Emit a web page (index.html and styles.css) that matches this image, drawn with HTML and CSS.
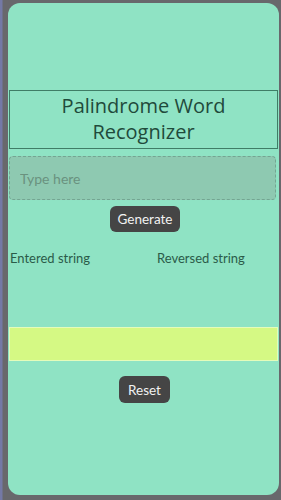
FILE: index.html
```html
<!DOCTYPE html>
<html>
<head>
<meta charset="utf-8">
<link rel="stylesheet" href="styles.css">
</head>
<body>
<div class="card">
  <h1 class="title">Palindrome Word Recognizer</h1>
  <input class="entry" type="text" placeholder="Type here">
  <div class="center"><button class="btn gen">Generate</button></div>
  <div class="labels">
    <span class="lab-left">Entered string</span>
    <span class="lab-right">Reversed string</span>
  </div>
  <div class="result"></div>
  <div class="center"><button class="btn reset">Reset</button></div>
</div>
</body>
</html>
```
FILE: styles.css
```css
html, body { margin: 0; padding: 0; }
body {
  width: 281px;
  height: 500px;
  background: linear-gradient(to right, #7479a6 0, #7479a6 2px, #68686c 3px);
  font-family: Lato, "Open Sans", sans-serif;
  padding: 3px 2px 5px 8px;
  box-sizing: border-box;
}
.card {
  background: #8fe3c4;
  border-radius: 12px;
  height: 492px;
  padding: 87px 1px 0 1px;
  box-sizing: border-box;
  display: flex;
  flex-direction: column;
}
.title {
  margin: 0;
  border: 1px solid #3f7d66;
  font-family: "Open Sans", "Noto Sans", sans-serif;
  font-weight: 400;
  font-size: 20px;
  line-height: 26px;
  color: #1f4a3b;
  text-align: center;
  padding: 2px 20px 3px;
}
.entry {
  margin: 7px 2px 0 0;
  height: 44px;
  box-sizing: border-box;
  border: 1px dashed #74a592;
  border-radius: 4px;
  background: #8ec9b1;
  padding: 0 10px;
  font-family: inherit;
  font-size: 14px;
  color: #333;
  outline: none;
}
.entry::placeholder { color: #6a927f; }
.center { display: flex; justify-content: center; }
.btn {
  background: #454545;
  color: #f2f2f2;
  border: none;
  border-radius: 6px;
  font-family: inherit;
  font-size: 13.5px;
  padding: 0 8px;
}
.gen { margin-top: 6px; height: 26px; margin-left: 3px; }
.labels {
  display: flex;
  margin-top: 17px;
  font-size: 13px;
  color: #2b5b49;
  line-height: 18px;
  padding-left: 1px;
}
.lab-left { width: 147px; }
.result {
  margin-top: 60px;
  height: 34px;
  background: #d5f984;
  border: 1px solid #e4fcbb;
  box-sizing: border-box;
}
.reset { margin-top: 15px; height: 27px; padding: 0 9px; margin-left: 2px; }
```
